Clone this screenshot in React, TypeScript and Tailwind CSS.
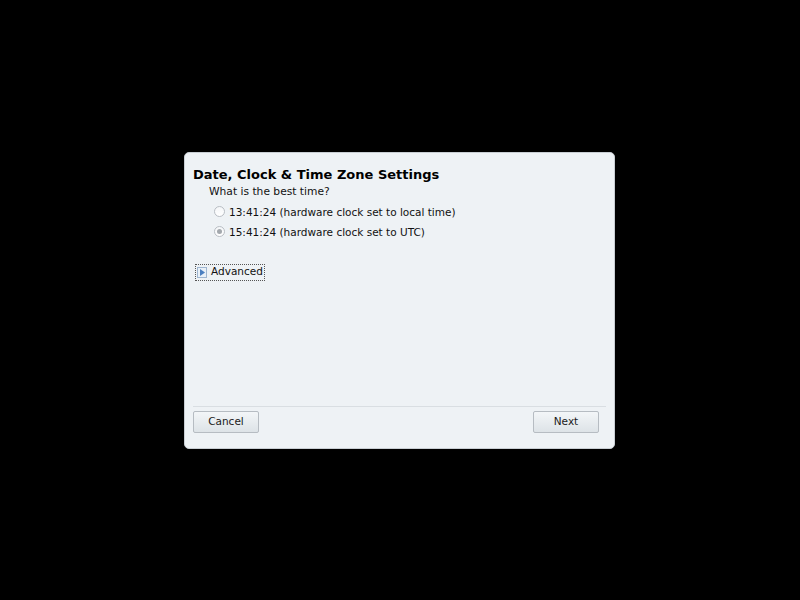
import React from 'react';

function Radio({ checked }: { checked?: boolean }) {
  return (
    <span className="w-[11px] h-[11px] rounded-full border border-[#b9bec4] bg-gradient-to-b from-[#f4f6f8] to-[#ffffff] flex items-center justify-center shrink-0">
      {checked && <span className="w-[5px] h-[5px] rounded-full bg-[#a3a8ad]" />}
    </span>
  );
}

function Button({ label }: { label: string }) {
  return (
    <button className="w-[66px] h-[22px] rounded-[2px] border border-[#b6bcc2] bg-gradient-to-b from-[#f3f6f8] to-[#dde3e7] text-[10.5px] text-[#1a1a1a] flex items-center justify-center">
      {label}
    </button>
  );
}

export default function App() {
  return (
    <div
      className="w-[800px] h-[600px] bg-black flex items-center pl-[184px]"
      style={{ fontFamily: '"DejaVu Sans", sans-serif' }}
    >
      <div className="w-[431px] h-[297px] rounded-[5px] border border-[#c8ced3] bg-[#eef2f5] flex flex-col px-[8px] pt-[14px] pb-[15px]">
        <div className="text-[13px] leading-[16px] font-bold text-black">Date, Clock &amp; Time Zone Settings</div>
        <div className="pl-[16px] mt-[2px] text-[10.7px] leading-[14px] text-[#111]">What is the best time?</div>
        <div className="pl-[21px] mt-[6px] flex flex-col gap-[6px] text-[10.5px] leading-[14px] text-[#111]">
          <div className="flex items-center gap-[4px]">
            <Radio />
            <span>13:41:24 (hardware clock set to local time)</span>
          </div>
          <div className="flex items-center gap-[4px]">
            <Radio checked />
            <span>15:41:24 (hardware clock set to UTC)</span>
          </div>
        </div>
        <div className="mt-[25px] ml-[2px] self-start h-[17px] border border-dotted border-[#555] flex items-center pl-[1px] pr-[1px] gap-[4px] text-[10.5px] text-[#111]">
          <span className="w-[10px] h-[11px] border border-[#9fb6d0] bg-[#e8f0f8] flex items-center justify-center">
            <svg width="5" height="7" viewBox="0 0 5 7">
              <path d="M0 0 L5 3.5 L0 7 Z" fill="#4a7fc0" />
            </svg>
          </span>
          <span>Advanced</span>
        </div>
        <div className="flex-1" />
        <div className="border-t border-[#d9dee2]" />
        <div className="mt-[4px] flex justify-between pr-[7px]">
          <Button label="Cancel" />
          <Button label="Next" />
        </div>
      </div>
    </div>
  );
}
